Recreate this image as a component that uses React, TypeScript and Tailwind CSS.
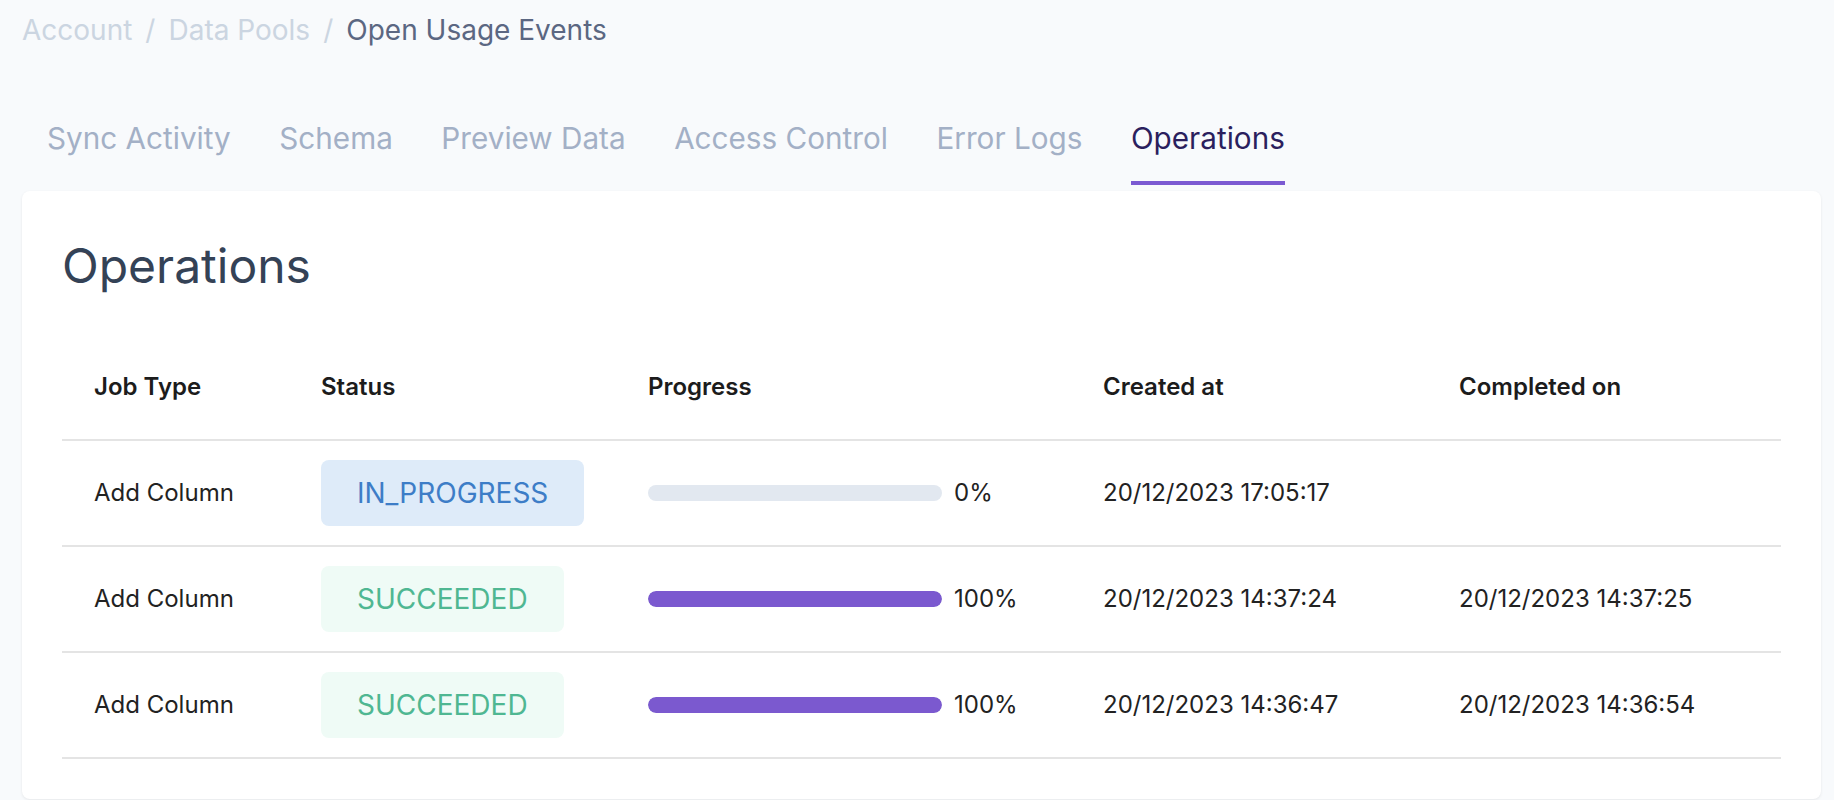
import React from "react";

const rows = [
  { job: "Add Column", status: "IN_PROGRESS", progress: 0, created: "20/12/2023 17:05:17", completed: "" },
  { job: "Add Column", status: "SUCCEEDED", progress: 100, created: "20/12/2023 14:37:24", completed: "20/12/2023 14:37:25" },
  { job: "Add Column", status: "SUCCEEDED", progress: 100, created: "20/12/2023 14:36:47", completed: "20/12/2023 14:36:54" },
];

const tabs = ["Sync Activity", "Schema", "Preview Data", "Access Control", "Error Logs", "Operations"];

const gridCols = "grid grid-cols-[227px_327px_455px_356px_1fr]";

function Badge({ status }: { status: string }) {
  if (status === "IN_PROGRESS") {
    return (
      <span className="inline-flex h-[66px] items-center rounded-[8px] bg-[#deebf9] px-[36px] text-[28px] text-[#3d7dc7]">
        {status}
      </span>
    );
  }
  return (
    <span className="inline-flex h-[66px] items-center rounded-[8px] bg-[#effbf6] px-[36px] text-[28px] text-[#4fb792]">
      {status}
    </span>
  );
}

export default function App() {
  return (
    <div
      className="min-h-screen bg-[#f8fafc] pl-[22px] pr-[13px] pt-[12px]"
      style={{ fontFamily: "Inter, 'Noto Sans', sans-serif" }}
    >
      <nav className="flex items-center gap-[13px] text-[28px] leading-[36px]">
        <span className="text-[#cbd5e1]">Account</span>
        <span className="text-[#cbd5e1]">/</span>
        <span className="text-[#cbd5e1]">Data Pools</span>
        <span className="text-[#cbd5e1]">/</span>
        <span className="text-[#5b6782]">Open Usage Events</span>
      </nav>

      <div className="mt-[72px] flex gap-[48.5px] px-[25px]">
        {tabs.map((t) => {
          const active = t === "Operations";
          return (
            <div
              key={t}
              className={
                active
                  ? "border-b-4 border-[#7b5ad2] pb-[25px] text-[29.7px] leading-[36px] text-[#2b1f5e]"
                  : "border-b-4 border-transparent pb-[25px] text-[29.7px] leading-[36px] text-[#a3b0c6]"
              }
            >
              {t}
            </div>
          );
        })}
      </div>

      <div className="mt-[6px] rounded-[8px] bg-white px-[40px] pb-[40px] pt-[46px] shadow-[0_1px_3px_rgba(0,0,0,0.08)]">
        <h1 className="text-[48px] leading-[58px] text-[#344256]">Operations</h1>

        <div className="mt-[40px]">
          <div className={`${gridCols} h-[106px] items-center border-b-2 border-[#e4e4e4] text-[24px] font-semibold text-[#1c1c1c]`}>
            <div className="pl-[32px]">Job Type</div>
            <div className="pl-[32px]">Status</div>
            <div className="pl-[32px]">Progress</div>
            <div className="pl-[32px]">Created at</div>
            <div className="pl-[32px]">Completed on</div>
          </div>
          {rows.map((r, i) => (
            <div
              key={i}
              className={`${gridCols} h-[106px] items-center border-b-2 border-[#e4e4e4] text-[24px] text-[#222222]`}
            >
              <div className="pl-[32px]">{r.job}</div>
              <div className="pl-[32px]">
                <Badge status={r.status} />
              </div>
              <div className="flex items-center pl-[32px]">
                <div className="h-[16px] w-[294px] overflow-hidden rounded-full bg-[#e2e8f0]">
                  <div className="h-full rounded-full bg-[#7b59cf]" style={{ width: `${r.progress}%` }} />
                </div>
                <span className="ml-[12px]">{r.progress}%</span>
              </div>
              <div className="pl-[32px]">{r.created}</div>
              <div className="pl-[32px]">{r.completed}</div>
            </div>
          ))}
        </div>
      </div>
    </div>
  );
}
